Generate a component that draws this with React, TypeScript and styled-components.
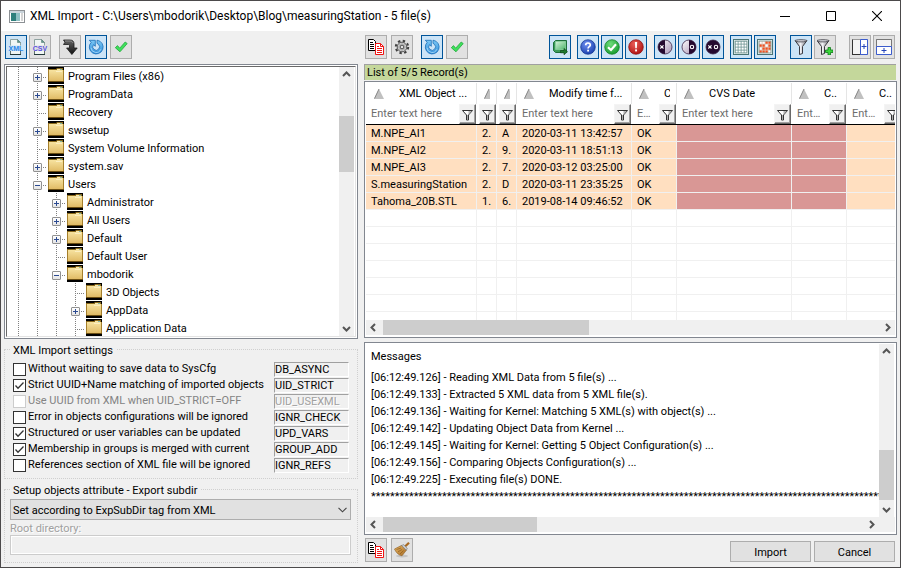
import React, { useState } from 'react';
import styled, { createGlobalStyle, css } from 'styled-components';

const UI_FONT = "Roboto, 'Noto Sans', sans-serif";

const GlobalStyle = createGlobalStyle`
  *, *::before, *::after { box-sizing: border-box; }
  body { margin: 0; background: #f0f0f0; }
  button, input, select { font: inherit; color: inherit; }
`;

/* ---------- window frame ---------- */

const Window = styled.div`
  display: flex;
  flex-direction: column;
  min-height: 100vh;
  border: 1px solid #4c4a4b;
  background: #f0f0f0;
  color: #000;
  font: 11px/16px ${UI_FONT};
`;

const TitleBar = styled.header`
  display: flex;
  align-items: center;
  height: 30px;
  padding-left: 8px;
  background: #fff;
`;

const Title = styled.h1`
  flex: 1;
  min-width: 0;
  margin: 0 0 0 5px;
  overflow: hidden;
  white-space: nowrap;
  text-overflow: ellipsis;
  font: 12px/16px ${UI_FONT};
`;

const CaptionButton = styled.button`
  display: grid;
  place-items: center;
  width: 46px;
  height: 28px;
  padding: 0;
  border: 0;
  background: none;
`;

const Body = styled.main`
  flex: 1;
  display: grid;
  grid-template-columns: 354px minmax(0, 1fr);
  gap: 6px;
  padding: 4px 3px 4px 3px;
`;

const Column = styled.section`
  display: flex;
  flex-direction: column;
  min-width: 0;
`;

/* ---------- toolbars ---------- */

const Toolbar = styled.div`
  display: flex;
  align-items: flex-end;
  height: 24px;
  padding: 0 2px 0 1px;
`;

const ToolGroup = styled.div<{ $gap?: number; $before?: number; $push?: boolean }>`
  display: flex;
  gap: ${(p) => p.$gap ?? 2}px;
  margin-left: ${(p) => (p.$push ? 'auto' : `${p.$before ?? 0}px`)};
`;

const ToolButton = styled.button<{ $on?: boolean }>`
  display: grid;
  place-items: center;
  width: 22px;
  height: 24px;
  padding: 0;
  border: 1px solid ${(p) => (p.$on ? '#005499' : '#adadad')};
  background: ${(p) => (p.$on ? '#cce4f7' : '#e1e1e1')};
`;

const PushButton = styled.button`
  width: 81px;
  height: 21px;
  padding: 2px 0 0;
  border: 1px solid #adadad;
  background: #e1e1e1;
`;

/* ---------- scroll bars ---------- */

const ScrollTrack = styled.div<{ $vertical?: boolean }>`
  display: flex;
  flex: none;
  flex-direction: ${(p) => (p.$vertical ? 'column' : 'row')};
  align-items: stretch;
  ${(p) => (p.$vertical ? 'width: 15px;' : 'height: 15px;')}
  background: #f0f0f0;
`;

const ScrollArrow = styled.button`
  display: grid;
  place-items: center;
  flex: none;
  min-width: 15px;
  min-height: 15px;
  padding: 0;
  border: 0;
  background: none;
`;

const ScrollSpace = styled.div<{ $grow: number }>`
  flex: ${(p) => p.$grow} 1 0;
`;

const ScrollThumb = styled(ScrollSpace)`
  background: #cdcdcd;
`;

const arrowPaths = {
  up: 'M1 6 4.5 2.5 8 6',
  down: 'M1 3 4.5 6.5 8 3',
  left: 'M6 1 2.5 4.5 6 8',
  right: 'M3 1 6.5 4.5 3 8',
};

function Arrow({ dir }: { dir: keyof typeof arrowPaths }) {
  return (
    <ScrollArrow type="button" aria-label={`Scroll ${dir}`} tabIndex={-1}>
      <svg width="9" height="9" viewBox="0 0 9 9">
        <path d={arrowPaths[dir]} fill="none" stroke="#555" strokeWidth="2" />
      </svg>
    </ScrollArrow>
  );
}

function ScrollBar({ vertical, parts }: { vertical?: boolean; parts: [number, number, number] }) {
  return (
    <ScrollTrack $vertical={vertical}>
      <Arrow dir={vertical ? 'up' : 'left'} />
      <ScrollSpace $grow={parts[0]} />
      <ScrollThumb $grow={parts[1]} />
      <ScrollSpace $grow={parts[2]} />
      <Arrow dir={vertical ? 'down' : 'right'} />
    </ScrollTrack>
  );
}

/* ---------- folder tree ---------- */

const TreeFrame = styled.div`
  display: flex;
  flex: 1 0 auto;
  margin-top: 5px;
  padding: 1px;
  border: 1px solid #828790;
  background: #fff;
`;

const TreeWell = styled.div`
  display: flex;
  flex: 1;
  padding-right: 1px;
  border: 1px solid;
  border-color: #696969 #e3e3e3 #e3e3e3 #696969;
`;

const TreeList = styled.ul`
  flex: 1;
  height: 269px;
  margin: 0;
  padding: 0 0 0 2px;
  overflow: hidden;
  list-style: none;
`;

const TreeRow = styled.li`
  display: flex;
  height: 18px;
  line-height: 20px;
  white-space: nowrap;
`;

const dotsDown = 'repeating-linear-gradient(#808080 0 1px, transparent 1px 2px) 9px 0 / 1px 100% no-repeat';
const dotsAcross =
  'repeating-linear-gradient(90deg, #808080 0 1px, transparent 1px 2px) 9px 10px / 10px 1px no-repeat';

const Guide = styled.span<{ $branch?: boolean }>`
  display: flex;
  flex: none;
  align-items: flex-end;
  justify-content: center;
  width: 19px;
  padding-bottom: 3px;
  background: ${(p) => (p.$branch ? `${dotsDown}, ${dotsAcross}` : dotsDown)};
`;

const Expander = styled.button`
  display: grid;
  place-items: center;
  width: 9px;
  height: 9px;
  padding: 0;
  border: 1px solid #919191;
  border-radius: 1px;
  background: linear-gradient(#fff, #e4e4e4);
`;

const FolderLabel = styled.span`
  display: flex;
  align-items: flex-start;
  gap: 4px;
  margin-left: 1px;
`;

type Node = { name: string; depth: number; state?: 'open' | 'closed' };

const folders: Node[] = [
  { name: 'Program Files (x86)', depth: 1, state: 'closed' },
  { name: 'ProgramData', depth: 1, state: 'closed' },
  { name: 'Recovery', depth: 1 },
  { name: 'swsetup', depth: 1, state: 'closed' },
  { name: 'System Volume Information', depth: 1 },
  { name: 'system.sav', depth: 1, state: 'closed' },
  { name: 'Users', depth: 1, state: 'open' },
  { name: 'Administrator', depth: 2, state: 'closed' },
  { name: 'All Users', depth: 2, state: 'closed' },
  { name: 'Default', depth: 2, state: 'closed' },
  { name: 'Default User', depth: 2 },
  { name: 'mbodorik', depth: 2, state: 'open' },
  { name: '3D Objects', depth: 3 },
  { name: 'AppData', depth: 3, state: 'closed' },
  { name: 'Application Data', depth: 3 },
];

function FolderIcon() {
  return (
    <svg width="16" height="17" viewBox="0 0 16 17">
      <rect width="16" height="17" fill="#000" />
      <path d="M0 2h8l1-1h6v2H0z" fill="#8a6a1c" />
      <path d="M9 2h5v1H9z" fill="#f6e7b0" />
      <path d="M12 2h2v1h-2z" fill="#7fb6a8" />
      <rect x="0" y="3" width="16" height="12" fill="#a57f2b" />
      <rect x="1" y="3" width="14" height="11" fill="url(#folderFill)" />
      <path d="M8 4h6v1H8z" fill="#fbeec0" />
      <rect x="0" y="14" width="16" height="1" fill="#6b4e12" />
    </svg>
  );
}

function Tree() {
  return (
    <TreeFrame>
      <TreeWell>
        <TreeList>
          {folders.map((f) => (
            <TreeRow key={f.name}>
              {Array.from({ length: f.depth }, (_, i) => (
                <Guide key={i} />
              ))}
              <Guide $branch>
                {f.state && (
                  <Expander type="button" aria-label={`${f.state === 'open' ? 'Collapse' : 'Expand'} ${f.name}`}>
                    <svg width="7" height="7" viewBox="0 0 7 7">
                      <path d="M1 3h5v1H1z" fill="#2b4a91" />
                      {f.state === 'closed' && <path d="M3 1h1v5H3z" fill="#2b4a91" />}
                    </svg>
                  </Expander>
                )}
              </Guide>
              <FolderLabel>
                <FolderIcon />
                {f.name}
              </FolderLabel>
            </TreeRow>
          ))}
        </TreeList>
        <ScrollBar vertical parts={[34, 56, 149]} />
      </TreeWell>
    </TreeFrame>
  );
}

/* ---------- settings ---------- */

const Group = styled.fieldset`
  min-width: 0;
  margin: 4px 0 0;
  padding: 5px 8px;
  border: 1px dotted #cfcfcf;
`;

const ExportGroup = styled(Group)`
  display: flex;
  flex-direction: column;
  padding: 3px 6px 7px 5px;
`;

const Legend = styled.legend`
  height: 13px;
  margin-left: -3px;
  padding: 0 3px;
  line-height: 16px;
`;

const ExportLegend = styled(Legend)`
  margin-left: 0;
`;

const OptionRow = styled.div`
  display: grid;
  grid-template-columns: minmax(0, 1fr) 75px;
  align-items: center;
  height: 16px;
`;

const OptionLabel = styled.label<{ $disabled?: boolean }>`
  display: flex;
  align-items: center;
  gap: 2px;
  white-space: nowrap;
  color: ${(p) => (p.$disabled ? '#838383' : '#000')};
`;

const Tick = styled.span`
  display: grid;
  flex: none;
  width: 13px;
  height: 13px;
  & > * { grid-area: 1 / 1; }
  & > svg { visibility: hidden; pointer-events: none; }
  & > input:checked + svg { visibility: visible; }
`;

const TickInput = styled.input`
  appearance: none;
  width: 13px;
  height: 13px;
  margin: 0;
  border: 1px solid #333;
  background: #fff;
  &:disabled { border-color: #ccc; }
`;

const etched = css`
  color: #a0a0a0;
  text-shadow: 1px 1px 0 #fff;
`;

const Flag = styled.span<{ $disabled?: boolean }>`
  height: 15px;
  border: 1px solid;
  border-color: #a0a0a0 #fff #fff #a0a0a0;
  line-height: 14px;
  ${(p) => p.$disabled && etched}
`;

const SelectBox = styled.span`
  display: grid;
  align-items: center;
  & > * { grid-area: 1 / 1; }
  & > svg { justify-self: end; margin-right: 4px; pointer-events: none; }
`;

const Select = styled.select`
  appearance: none;
  width: 100%;
  height: 21px;
  padding: 2px 20px 0 2px;
  border: 1px solid #adadad;
  border-radius: 0;
  background: #e1e1e1;
`;

const RootLabel = styled.label`
  height: 15px;
  line-height: 17px;
  ${etched}
`;

const RootInput = styled.input`
  height: 20px;
  border: 1px solid #ccc;
  outline: 1px solid #fff;
  outline-offset: -2px;
  background: #f0f0f0;
`;

type Option = { label: string; flag: string; on?: boolean; disabled?: boolean };

const options: Option[] = [
  { label: 'Without waiting to save data to SysCfg', flag: 'DB_ASYNC' },
  { label: 'Strict UUID+Name matching of imported objects', flag: 'UID_STRICT', on: true },
  { label: 'Use UUID from XML when UID_STRICT=OFF', flag: 'UID_USEXML', disabled: true },
  { label: 'Error in objects configurations will be ignored', flag: 'IGNR_CHECK' },
  { label: 'Structured or user variables can be updated', flag: 'UPD_VARS', on: true },
  { label: 'Membership in groups is merged with current', flag: 'GROUP_ADD', on: true },
  { label: 'References section of XML file will be ignored', flag: 'IGNR_REFS' },
];

function Settings() {
  const [checked, setChecked] = useState(() => options.map((o) => !!o.on));
  const toggle = (i: number) => setChecked((c) => c.map((v, n) => (n === i ? !v : v)));
  return (
    <>
      <Group>
        <Legend>XML Import settings</Legend>
        {options.map((o, i) => (
          <OptionRow key={o.flag}>
            <OptionLabel $disabled={o.disabled}>
              <Tick>
                <TickInput type="checkbox" checked={checked[i]} disabled={o.disabled} onChange={() => toggle(i)} />
                <svg width="13" height="13" viewBox="0 0 13 13">
                  <path d="M2.5 6.5 5 9.2 10.5 3.5" fill="none" stroke="#333" strokeWidth="1.3" />
                </svg>
              </Tick>
              {o.label}
            </OptionLabel>
            <Flag $disabled={o.disabled}>{o.flag}</Flag>
          </OptionRow>
        ))}
      </Group>
      <ExportGroup>
        <ExportLegend>Setup objects attribute - Export subdir</ExportLegend>
        <SelectBox>
          <Select aria-label="Export subdir">
            <option>Set according to ExpSubDir tag from XML</option>
          </Select>
          <svg width="9" height="6" viewBox="0 0 9 6">
            <path d="M.5.8 4.5 4.8 8.5.8" fill="none" stroke="#444" strokeWidth="1.1" />
          </svg>
        </SelectBox>
        <RootLabel htmlFor="root-dir">Root directory:</RootLabel>
        <RootInput id="root-dir" disabled />
      </ExportGroup>
    </>
  );
}

/* ---------- record list ---------- */

const ListCaption = styled.h2`
  height: 16px;
  margin: 5px 1px 1px 0;
  padding-left: 2px;
  border-top: 1px solid #a0a0a0;
  border-left: 1px solid #a0a0a0;
  background: #c4d79b;
  font: inherit;
  line-height: 15px;
`;

const Panel = styled.div`
  display: flex;
  flex-direction: column;
  padding: 1px 1px 2px;
  border: 1px solid #828790;
  background: #fff;
`;

const TableClip = styled.div`
  height: 237px;
  overflow: hidden;
`;

const Table = styled.table`
  width: 536px;
  min-width: 100%;
  table-layout: fixed;
  border-collapse: separate;
  border-spacing: 0;
`;

const HeadCell = styled.th`
  height: 42px;
  padding: 0;
  border-bottom: 1px solid #000;
  font-weight: normal;
  text-align: left;
  vertical-align: top;
`;

const HeadTitle = styled.div<{ $first?: boolean }>`
  display: flex;
  height: 21px;
  padding: 0 6px 0 ${(p) => (p.$first ? 8 : 7)}px;
  border-right: 1px solid #e5e5e5;
  white-space: nowrap;
`;

const HeadClip = styled.span`
  display: flex;
  flex: 1;
  gap: 15px;
  align-items: center;
  min-width: 0;
  overflow: hidden;
  & > svg { flex: none; }
`;

const FilterRow = styled.div`
  display: flex;
  height: 20px;
  padding-right: 1px;
`;

const FilterInput = styled.input`
  flex: 1;
  width: 0;
  min-width: 0;
  padding: 0 6px 0 5px;
  border: 0;
  background: none;
  text-overflow: ellipsis;
  outline: 0;
  &::placeholder { color: #6d6d6d; }
`;

const FilterButton = styled.button`
  display: grid;
  place-items: center;
  flex: none;
  width: 17px;
  height: 20px;
  padding: 0;
  border: 1px solid;
  border-color: #f4f4f4 #696969 #696969 #f4f4f4;
  box-shadow: inset -1px -1px 0 #a0a0a0;
  background: #f0f0f0;
`;

const FilterSpacer = styled.span`
  width: 2px;
  flex: none;
`;

const Cell = styled.td<{ $tone?: 'peach' | 'rose' }>`
  height: 17px;
  padding: 2px 0 0 5px;
  overflow: hidden;
  border-right: 1px solid #f0f0f0;
  border-bottom: 1px solid #f0f0f0;
  background: ${(p) => (p.$tone === 'peach' ? '#ffdfc0' : p.$tone === 'rose' ? '#d99795' : '#fff')};
  line-height: 14px;
  white-space: nowrap;
`;

const columns = [
  { title: 'XML Object ...', name: 'XML Object', width: 111 },
  { title: '', name: 'Revision', width: 20, narrow: true },
  { title: '', name: 'Attribute', width: 20, narrow: true },
  { title: 'Modify time f...', name: 'Modify time', width: 115 },
  { title: 'C', name: 'Check', width: 45 },
  { title: 'CVS Date', name: 'CVS Date', width: 115 },
  { title: 'C..', name: 'CVS user', width: 55 },
  { title: 'C..', name: 'CVS comment', width: 55 },
];

const records = [
  ['M.NPE_AI1', '2.', 'A', '2020-03-11 13:42:57', 'OK'],
  ['M.NPE_AI2', '2.', '9.', '2020-03-11 18:51:13', 'OK'],
  ['M.NPE_AI3', '2.', '7.', '2020-03-12 03:25:00', 'OK'],
  ['S.measuringStation', '2.', 'D', '2020-03-11 23:35:25', 'OK'],
  ['Tahoma_20B.STL', '1.', '6.', '2019-08-14 09:46:52', 'OK'],
];

function SmallFunnel() {
  return (
    <svg width="13" height="13" viewBox="0 0 13 13">
      <path d="M1.5 2.5h10L7.5 7v5h-2V7z" fill="#fff" stroke="#333" />
      <path d="M7.5 3h3.2L7.5 6.6z" fill="#b5b5b5" />
      <path d="M6.5 7v4" stroke="#aaa" />
    </svg>
  );
}

function SortMark() {
  return (
    <svg width="10" height="10" viewBox="0 0 10 10">
      <path d="M5 0 10 10H0z" fill="#c0c0c0" />
      <path d="M5 0 .5 9.5" stroke="#858585" fill="none" />
    </svg>
  );
}

function Records() {
  return (
    <Panel>
      <TableClip>
        <Table>
          <colgroup>
            {columns.map((c) => (
              <col key={c.name} style={{ width: c.width }} />
            ))}
          </colgroup>
          <thead>
            <tr>
              {columns.map((c, i) => (
                <HeadCell key={c.name} scope="col">
                  <HeadTitle $first={i === 0}>
                    <HeadClip>
                      <SortMark />
                      {c.title}
                    </HeadClip>
                  </HeadTitle>
                  <FilterRow>
                    {c.narrow ? (
                      <FilterSpacer />
                    ) : (
                      <FilterInput aria-label={`Filter ${c.name}`} placeholder="Enter text here" />
                    )}
                    <FilterButton type="button" aria-label={`Filter options for ${c.name}`}>
                      <SmallFunnel />
                    </FilterButton>
                  </FilterRow>
                </HeadCell>
              ))}
            </tr>
          </thead>
          <tbody>
            {records.map((r) => (
              <tr key={r[0]}>
                {columns.map((c, i) => (
                  <Cell key={c.name} $tone={i === 5 || i === 6 ? 'rose' : 'peach'}>
                    {r[i]}
                  </Cell>
                ))}
              </tr>
            ))}
            {Array.from({ length: 7 }, (_, n) => (
              <tr key={n}>
                {columns.map((c) => (
                  <Cell key={c.name} />
                ))}
              </tr>
            ))}
          </tbody>
        </Table>
      </TableClip>
      <ScrollBar parts={[2, 206, 290]} />
    </Panel>
  );
}

/* ---------- messages ---------- */

const MessagePanel = styled(Panel)`
  flex: 1;
  margin-top: 4px;
`;

const MessageArea = styled.div`
  display: flex;
  flex: 1;
  padding-right: 1px;
`;

const MessageText = styled.div`
  flex: 1;
  min-width: 0;
  overflow: hidden;
  padding: 5px 0 0 5px;
`;

const MessageTitle = styled.h2`
  margin: 0 0 4px;
  font: inherit;
`;

const MessageList = styled.ol`
  margin: 0;
  padding: 0;
  list-style: none;
  line-height: 17px;
  white-space: nowrap;
`;

const ScrollRow = styled.div`
  display: grid;
  grid-template-columns: minmax(0, 1fr) 16px;
  background: #f0f0f0;
`;

const messages = [
  '[06:12:49.126] - Reading XML Data from 5 file(s) ...',
  '[06:12:49.133] - Extracted 5 XML data from 5 XML file(s).',
  '[06:12:49.136] - Waiting for Kernel: Matching 5 XML(s) with object(s) ...',
  '[06:12:49.142] - Updating Object Data from Kernel ...',
  '[06:12:49.145] - Waiting for Kernel: Getting 5 Object Configuration(s) ...',
  '[06:12:49.156] - Comparing Objects Configuration(s) ...',
  '[06:12:49.225] - Executing file(s) DONE.',
  '*'.repeat(140),
];

function Messages() {
  return (
    <MessagePanel>
      <MessageArea>
        <MessageText>
          <MessageTitle>Messages</MessageTitle>
          <MessageList>
            {messages.map((m) => (
              <li key={m}>{m}</li>
            ))}
          </MessageList>
        </MessageText>
        <ScrollBar vertical parts={[90, 50, 2]} />
      </MessageArea>
      <ScrollRow>
        <ScrollBar parts={[2, 154, 326]} />
      </ScrollRow>
    </MessagePanel>
  );
}

const Footer = styled.footer`
  display: flex;
  align-items: flex-end;
  gap: 4px;
  margin: 3px 2px 1px 1px;
`;

const FooterActions = styled.div`
  display: flex;
  gap: 3px;
  margin-left: auto;
`;

/* ---------- toolbar drawings ---------- */

function Svg({ children, size = 16 }: { children: React.ReactNode; size?: number }) {
  return (
    <svg width={size} height={size} viewBox="0 0 16 16">
      {children}
    </svg>
  );
}

const GradientDefs = styled.svg`
  position: absolute;
`;

const Gradients = () => (
  <GradientDefs width="0" height="0" aria-hidden="true">
    <defs>
      <linearGradient id="folderFill" x1="0" y1="0" x2="0" y2="1">
        <stop offset="0" stopColor="#f7e3a0" />
        <stop offset="1" stopColor="#e0bb66" />
      </linearGradient>
      <linearGradient id="metal" x1="0" y1="0" x2="1" y2="0">
        <stop offset="0" stopColor="#8c8c94" />
        <stop offset=".45" stopColor="#f2f2f6" />
        <stop offset="1" stopColor="#77777f" />
      </linearGradient>
      <linearGradient id="blueArrow" x1="0" y1="0" x2="0" y2="1">
        <stop offset="0" stopColor="#7cc8f5" />
        <stop offset="1" stopColor="#2f8fdc" />
      </linearGradient>
      <linearGradient id="darkArrow" x1="0" y1="0" x2="0" y2="1">
        <stop offset="0" stopColor="#666" />
        <stop offset="1" stopColor="#111" />
      </linearGradient>
      <radialGradient id="blueBall" cx=".4" cy=".3" r=".8">
        <stop offset="0" stopColor="#6f8ff0" />
        <stop offset="1" stopColor="#123aa8" />
      </radialGradient>
      <radialGradient id="greenBall" cx=".4" cy=".3" r=".8">
        <stop offset="0" stopColor="#6fdc7c" />
        <stop offset="1" stopColor="#0c9426" />
      </radialGradient>
      <radialGradient id="redBall" cx=".4" cy=".3" r=".8">
        <stop offset="0" stopColor="#ea5d58" />
        <stop offset="1" stopColor="#a80c0c" />
      </radialGradient>
      <linearGradient id="greenDisk" x1="0" y1="0" x2="1" y2="1">
        <stop offset="0" stopColor="#d5f2da" />
        <stop offset="1" stopColor="#4db56a" />
      </linearGradient>
      <linearGradient id="halfBall" x1="0" y1="0" x2="1" y2="1">
        <stop offset="0" stopColor="#fff" />
        <stop offset="1" stopColor="#a893b4" />
      </linearGradient>
      <linearGradient id="broomFill" x1="0" y1="0" x2="1" y2="1">
        <stop offset="0" stopColor="#e9b866" />
        <stop offset="1" stopColor="#a66a22" />
      </linearGradient>
    </defs>
  </GradientDefs>
);

const DocIcon = ({ kind, color }: { kind: string; color: string }) => (
  <Svg>
    <path d="M2.500 6.500v-6h7l3 3v3" fill="#f1f6f4" stroke="#8fa3a1" />
    <path d="M9.500.5v3h3z" fill="#5f9a8c" stroke="#5d7f7a" strokeWidth=".6" />
    <path d="M2.500 12v3.500h10V12" fill="#f1f6f4" stroke="#5d6f6e" />
    <path d="M2 15.500h11" stroke="#24393a" />
    <text
      x="8"
      y="12"
      textAnchor="middle"
      fontFamily="'Liberation Sans', sans-serif"
      fontSize="7"
      fontWeight="bold"
      fill={color}
    >
      {kind}
    </text>
  </Svg>
);

const DownArrowIcon = () => (
  <Svg>
    <path
      d="M1.5 1h6.3C10.700 1 12 2.500 12 5v4h3.200L9.900 15.500 4.600 9H7.500V6.800C7.500 5.700 7 5.500 6 5.500H1.500L3 3.200z"
      fill="url(#darkArrow)"
      stroke="#1a1a1a"
      strokeWidth=".8"
    />
    <path d="M3 2h5c1.700 0 2.600.8 2.800 2" fill="none" stroke="#999" strokeWidth=".8" />
  </Svg>
);

const RefreshIcon = () => (
  <Svg>
    <path
      d="M1.300 1.300h6v6L5.500 5.700a3.400 3.400 0 1 0 5-.3 4 4 0 0 0-1.500-1V1.200A6.900 6.900 0 1 1 3.200 3.300z"
      fill="url(#blueArrow)"
      stroke="#1c6fb8"
      strokeWidth=".8"
    />
    <path d="M3 8.800a5.100 5.100 0 0 0 9.800 1.500" fill="none" stroke="#b6e2fb" strokeWidth=".8" />
  </Svg>
);

const CheckIcon = () => (
  <Svg>
    <path
      d="M2.300 8.700 4.500 6.600 6.700 9.200 12.200 3l2 1.600L7 12.800z"
      fill="#3fe05c"
      stroke="#1fa83a"
      strokeWidth=".8"
      strokeLinejoin="round"
    />
  </Svg>
);

const CopyIcon = () => (
  <Svg>
    <path d="M.5.500h5l2 2v9h-7z" fill="#fff" stroke="#000" />
    <path d="M2 3.500h3M2 5.500h4M2 7.500h4M2 9.500h4" stroke="#000" />
    <path d="M7.500 4.500h5l3 3v8h-8z" fill="#fff" stroke="#f01414" />
    <path d="M12.500 4.500v3h3M9 7.500h2M9 9.500h5M9 11.500h5M9 13.500h5" stroke="#f01414" fill="none" />
  </Svg>
);

const GearIcon = () => (
  <Svg>
    <circle cx="8" cy="8" r="6.200" fill="none" stroke="#3f3f3f" strokeWidth="2" strokeDasharray="2.400 2.470" />
    <circle cx="8" cy="8" r="4.800" fill="#d9d9d9" stroke="#555" strokeWidth="1" />
    <circle cx="8" cy="8" r="3.300" fill="none" stroke="#aaa" strokeWidth="1" />
    <circle cx="8" cy="8" r="1.900" fill="#e1e1e1" stroke="#444" strokeWidth="1" />
  </Svg>
);

const ExportIcon = () => (
  <Svg>
    <path d="M3.500 1.500h11v12h-11l-2-2v-8z" fill="#3c9c5a" stroke="#1d6f3b" strokeLinejoin="round" />
    <path d="M3.500 2.500h10v8h-10z" fill="url(#greenDisk)" stroke="#8fd3a2" strokeWidth=".7" />
    <path d="M8.500 11.500h3.500v-2l3.500 3.200-3.500 3.100v-2H8.500z" fill="#1f7a2f" stroke="#0c3d16" strokeWidth=".6" />
  </Svg>
);

const HelpIcon = () => (
  <Svg>
    <circle cx="8" cy="8" r="7.300" fill="url(#blueBall)" stroke="#0d2f8c" strokeWidth=".7" />
    <path d="M5.700 6.200C5.700 3.300 10.300 3.300 10.300 6c0 1.700-2.200 1.700-2.200 3.500" fill="none" stroke="#fff" strokeWidth="1.700" />
    <rect x="7.200" y="10.700" width="1.800" height="1.800" fill="#fff" />
  </Svg>
);

const OkIcon = () => (
  <Svg>
    <circle cx="8" cy="8" r="7.300" fill="url(#greenBall)" stroke="#0a7d20" strokeWidth=".7" />
    <path d="M4 8.200 7 11l5-5.800" fill="none" stroke="#fff" strokeWidth="2.200" />
  </Svg>
);

const ErrorIcon = () => (
  <Svg>
    <circle cx="8" cy="8" r="7.300" fill="url(#redBall)" stroke="#8c0808" strokeWidth=".7" />
    <path d="M6.900 3h2.300L8.800 9.200H7.300z" fill="#fff" />
    <rect x="7.100" y="10.400" width="1.900" height="2" fill="#fff" />
  </Svg>
);

const BallIcon = ({ side }: { side: 'left' | 'right' | 'both' }) => (
  <Svg>
    <circle cx="8" cy="8" r="7" fill={side === 'both' ? '#25092f' : 'url(#halfBall)'} stroke="#3b2447" strokeWidth=".8" />
    {side === 'left' && <path d="M8 1a7 7 0 0 0 0 14z" fill="#25092f" />}
    {side === 'right' && <path d="M8 1a7 7 0 0 1 0 14z" fill="#25092f" />}
    {side !== 'right' && <path d="M3.300 6.300 6.500 9.500M6.500 6.300 3.300 9.500" stroke="#fff" strokeWidth="1.100" />}
    {side !== 'left' && <circle cx="11" cy="8" r="1.700" fill="none" stroke="#fff" strokeWidth="1.100" />}
  </Svg>
);

const markedCells = [2, 3, 4, 5, 7, 9, 10, 11, 12, 13, 14];

const TableIcon = ({ marked }: { marked?: boolean }) => (
  <Svg>
    <rect x=".5" y=".5" width="15" height="15" fill="#eef5f3" stroke="#4b7474" />
    <rect x="2" y="2" width="12" height="12" fill={marked ? '#d9c4b8' : '#6f9594'} />
    {Array.from({ length: 16 }, (_, n) => (
      <rect
        key={n}
        x={3 + (n % 4) * 3 - 0.5}
        y={3 + Math.floor(n / 4) * 3 - 0.5}
        width={2.2}
        height={2.2}
        fill={marked && markedCells.includes(n) ? '#f4511e' : '#fff'}
      />
    ))}
    <rect x="2" y="2" width="12" height="12" fill="none" stroke="#6d9291" strokeWidth=".7" />
  </Svg>
);

const FunnelIcon = ({ plus }: { plus?: boolean }) => (
  <Svg>
    <g transform={plus ? 'translate(-2 0)' : undefined}>
      <path d="M2 1.500h12l-4.500 6v7l-3 1v-8z" fill="url(#metal)" stroke="#3b3b42" strokeLinejoin="round" />
      <ellipse cx="8" cy="1.800" rx="6" ry="1.100" fill="#dcdce4" stroke="#3b3b42" strokeWidth=".8" />
    </g>
    {plus && (
      <path d="M11 8.500h2.500V11H16v2.500h-2.500V16H11v-2.500H8.500V11H11z" fill="#3cd63c" stroke="#0b7a17" strokeWidth=".8" />
    )}
  </Svg>
);

const AddColumnIcon = () => (
  <Svg>
    <path d="M.5.500h15v15H.5z" fill="#f4f4f4" stroke="#9a9a9a" />
    <path d="M.5.500v15M0 15.500h10" stroke="#333" />
    <path d="M8.500.500h7v15h-7z" fill="#fff" stroke="#3c5ccc" />
    <path d="M9.500 7.500h5M12 5v5" stroke="#2444b8" />
  </Svg>
);

const AddRowIcon = () => (
  <Svg>
    <path d="M.5.500h15v15H.5z" fill="#f4f4f4" stroke="#9a9a9a" />
    <path d="M.5 8V.500h15V8" fill="none" stroke="#777" />
    <path d="M.5 7.500h15v8H.5z" fill="#fff" stroke="#3c5ccc" />
    <path d="M5.500 11.500h5M8 9v5" stroke="#2444b8" />
  </Svg>
);

const BroomIcon = () => (
  <Svg>
    <ellipse cx="8" cy="14" rx="6" ry="1.500" fill="#c4c4c4" />
    <path d="M15 .8 10.500 5" stroke="#a9691f" strokeWidth="2.200" />
    <path d="M.5 7 7.800 3.300l4.700 4.800L8 13.800C4.500 13.200 2 10.500.5 7z" fill="url(#broomFill)" stroke="#8a5a20" strokeWidth=".6" />
    <path d="M7.500 3.500 9.700 2.600l3.600 3.700-1 2z" fill="#c9c9c9" stroke="#777" strokeWidth=".6" />
    <path d="M2.500 7.500 7 6M4 9.700l4-2.200M6 12l3.500-3.500" stroke="#8a5a20" strokeWidth=".7" />
  </Svg>
);

const AppIcon = () => (
  <svg width="16" height="13" viewBox="0 0 16 13">
    <rect x=".5" y=".5" width="15" height="12" fill="#fff" stroke="#8c9094" />
    <path d="M1 1h14v2H1z" fill="#c9d3da" />
    <rect x="2" y="3" width="5" height="8" fill="#2f7f7c" />
    <rect x="7" y="3" width="4" height="8" fill="#8fc0c4" />
    <rect x="12" y="3" width="2" height="8" fill="#d4d4d4" />
  </svg>
);

type Tool = { label: string; icon: React.ReactNode; on?: boolean };

function Tools({ items, ...layout }: { items: Tool[]; gap?: number; before?: number; push?: boolean }) {
  return (
    <ToolGroup $gap={layout.gap} $before={layout.before} $push={layout.push}>
      {items.map((t) => (
        <ToolButton key={t.label} type="button" aria-label={t.label} $on={t.on}>
          {t.icon}
        </ToolButton>
      ))}
    </ToolGroup>
  );
}

const refreshTools: Tool[] = [
  { label: 'Refresh', icon: <RefreshIcon />, on: true },
  { label: 'Confirm', icon: <CheckIcon /> },
];

export default function App() {
  return (
    <Window>
      <GlobalStyle />
      <Gradients />
      <TitleBar>
        <AppIcon />
        <Title>XML Import - C:\Users\mbodorik\Desktop\Blog\measuringStation - 5 file(s)</Title>
        <CaptionButton type="button" aria-label="Minimize">
          <svg width="10" height="10" viewBox="0 0 10 10">
            <path d="M0 5.500h10" stroke="#000" />
          </svg>
        </CaptionButton>
        <CaptionButton type="button" aria-label="Maximize">
          <svg width="10" height="10" viewBox="0 0 10 10">
            <path d="M.5.500h9v9h-9z" fill="none" stroke="#000" />
          </svg>
        </CaptionButton>
        <CaptionButton type="button" aria-label="Close">
          <svg width="10" height="10" viewBox="0 0 10 10">
            <path d="M0 0 10 10M10 0 0 10" stroke="#000" strokeWidth="1.100" />
          </svg>
        </CaptionButton>
      </TitleBar>
      <Body>
        <Column>
          <Toolbar>
            <Tools
              items={[
                { label: 'XML files', icon: <DocIcon kind="XML" color="#2a86e8" />, on: true },
                { label: 'CSV files', icon: <DocIcon kind="CSV" color="#5a50e0" /> },
              ]}
            />
            <Tools before={8} items={[{ label: 'Go to folder', icon: <DownArrowIcon /> }]} />
            <Tools before={4} gap={3} items={refreshTools} />
          </Toolbar>
          <Tree />
          <Settings />
        </Column>
        <Column>
          <Toolbar>
            <Tools
              gap={4}
              items={[
                { label: 'Copy', icon: <CopyIcon /> },
                { label: 'Options', icon: <GearIcon /> },
              ]}
            />
            <Tools before={8} gap={3} items={refreshTools} />
            <Tools push items={[{ label: 'Export', icon: <ExportIcon />, on: true }]} />
            <Tools
              before={6}
              items={[
                { label: 'Unknown', icon: <HelpIcon />, on: true },
                { label: 'Valid', icon: <OkIcon />, on: true },
                { label: 'Errors', icon: <ErrorIcon />, on: true },
              ]}
            />
            <Tools
              before={7}
              items={[
                { label: 'Only in XML', icon: <BallIcon side="left" />, on: true },
                { label: 'Only in objects', icon: <BallIcon side="right" />, on: true },
                { label: 'In both', icon: <BallIcon side="both" />, on: true },
              ]}
            />
            <Tools
              before={6}
              items={[
                { label: 'Same rows', icon: <TableIcon />, on: true },
                { label: 'Different rows', icon: <TableIcon marked />, on: true },
              ]}
            />
            <Tools
              before={14}
              items={[
                { label: 'Filter', icon: <FunnelIcon />, on: true },
                { label: 'Add filter', icon: <FunnelIcon plus /> },
              ]}
            />
            <Tools
              before={13}
              items={[
                { label: 'Add column', icon: <AddColumnIcon /> },
                { label: 'Add row', icon: <AddRowIcon /> },
              ]}
            />
          </Toolbar>
          <ListCaption>List of 5/5 Record(s)</ListCaption>
          <Records />
          <Messages />
          <Footer>
            <ToolButton type="button" aria-label="Copy messages">
              <CopyIcon />
            </ToolButton>
            <ToolButton type="button" aria-label="Clear messages">
              <BroomIcon />
            </ToolButton>
            <FooterActions>
              <PushButton type="button">Import</PushButton>
              <PushButton type="button">Cancel</PushButton>
            </FooterActions>
          </Footer>
        </Column>
      </Body>
    </Window>
  );
}
